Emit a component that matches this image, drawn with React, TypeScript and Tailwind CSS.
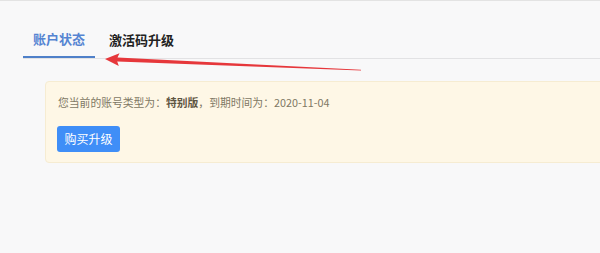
export default function App() {
    return (
        <div
            className="relative h-[253px] w-[600px] overflow-hidden border-t border-[#e3e3e3] bg-[#f8f8f9]"
            style={{ fontFamily: '"Noto Sans CJK SC", "Noto Sans", sans-serif' }}
        >
            {/* tabs */}
            <div className="ml-[23px] mt-[21px] flex border-b border-[#e2e2e4]">
                <div className="-mb-px flex h-[36px] items-center border-b-2 border-[#4f80c9] px-[10px] text-[13px] font-bold text-[#5584d2]">
                    账户状态
                </div>
                <div className="ml-[3px] flex h-[36px] items-center px-[11px] text-[13px] font-bold text-[#222]">
                    激活码升级
                </div>
            </div>

            {/* account panel */}
            <div className="ml-[45px] mr-[-10px] mt-[22px] rounded-[4px] border border-[#f6ecd2] bg-[#fef7e6] pb-[10px] pl-[12px] pt-[12px]">
                <p className="text-[10.8px] leading-[16px] text-[#7f7864]">
                    您当前的账号类型为：
                    <span className="font-bold text-[#5e5542]">特别版</span>
                    ，到期时间为：2020-11-04
                </p>
                <button className="-ml-px mt-[16px] flex h-[26px] w-[63px] items-center justify-center rounded-[3px] bg-[#3f8ef7] text-[12px] text-white">
                    购买升级
                </button>
            </div>

            {/* annotation arrow */}
            <svg className="pointer-events-none absolute left-0 top-0" width="600" height="253">
                <polygon
                    points="105,58 119.5,52.2 117.5,56.6 361,68.7 361,69.4 117.2,60.6 118.8,65"
                    fill="#e6373b"
                />
            </svg>
        </div>
    );
}
